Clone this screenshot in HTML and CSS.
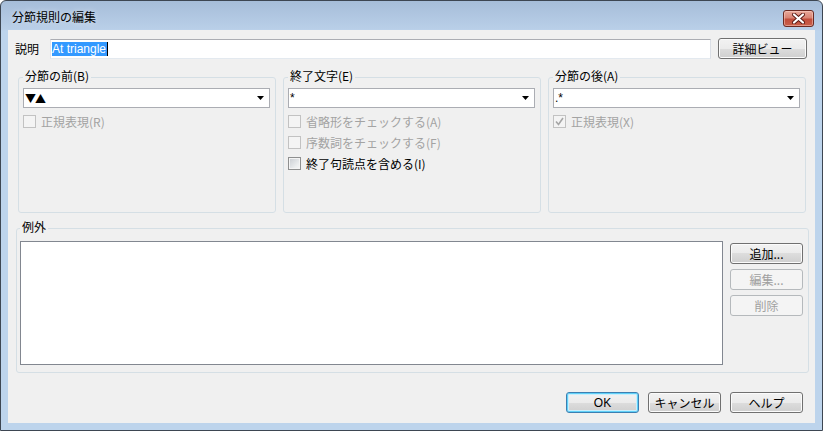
FILE: index.html
```html
<!DOCTYPE html>
<html lang="ja">
<head>
<meta charset="utf-8">
<title>分節規則の編集</title>
<link rel="stylesheet" href="styles.css">
</head>
<body>
<div class="window">
  <div class="titlebar">
    <span class="title">分節規則の編集</span>
    <div class="close">
      <svg width="13" height="11" viewBox="0 0 13 11"><path d="M2 1.5 L11 9.5 M11 1.5 L2 9.5" stroke="#5a1a14" stroke-width="4" stroke-linecap="round"/><path d="M2 1.5 L11 9.5 M11 1.5 L2 9.5" stroke="#ffffff" stroke-width="2.2" stroke-linecap="round"/></svg>
    </div>
  </div>
  <div class="client">
    <div class="row-desc">
      <span class="lbl">説明</span>
      <div class="textbox"><span class="sel">At triangle</span></div>
      <button class="btn detail">詳細ビュー</button>
    </div>
    <div class="groups">
      <fieldset class="group">
        <legend>分節の前(B)</legend>
        <div class="combo"><span class="val tri">▼▲</span><svg class="arrow" width="7" height="4" viewBox="0 0 7 4"><path d="M0 0 H7 L3.5 4 Z" fill="#000"/></svg></div>
        <div class="check disabled"><span class="box"></span><span>正規表現(R)</span></div>
      </fieldset>
      <fieldset class="group">
        <legend>終了文字(E)</legend>
        <div class="combo"><span class="val">*</span><svg class="arrow" width="7" height="4" viewBox="0 0 7 4"><path d="M0 0 H7 L3.5 4 Z" fill="#000"/></svg></div>
        <div class="check disabled"><span class="box"></span><span>省略形をチェックする(A)</span></div>
        <div class="check disabled"><span class="box"></span><span>序数詞をチェックする(F)</span></div>
        <div class="check"><span class="box"></span><span>終了句読点を含める(I)</span></div>
      </fieldset>
      <fieldset class="group">
        <legend>分節の後(A)</legend>
        <div class="combo"><span class="val">.*</span><svg class="arrow" width="7" height="4" viewBox="0 0 7 4"><path d="M0 0 H7 L3.5 4 Z" fill="#000"/></svg></div>
        <div class="check disabled"><span class="box"><svg width="11" height="11" viewBox="0 0 11 11"><path d="M2 5.5 L4.5 8.5 L9 2" fill="none" stroke="#a6a6a6" stroke-width="1.6"/></svg></span><span>正規表現(X)</span></div>
      </fieldset>
    </div>
    <fieldset class="exc">
      <legend>例外</legend>
      <div class="exc-body">
        <div class="listbox"></div>
        <div class="side">
          <button class="btn">追加...</button>
          <button class="btn" disabled>編集...</button>
          <button class="btn" disabled>削除</button>
        </div>
      </div>
    </fieldset>
    <div class="footer">
      <button class="btn default">OK</button>
      <button class="btn">キャンセル</button>
      <button class="btn">ヘルプ</button>
    </div>
  </div>
</div>
</body>
</html>
```
FILE: styles.css
```css
html, body {
  margin: 0;
  padding: 0;
  background: #ffffff;
}
body {
  font-family: "Liberation Sans", "Noto Sans CJK JP", sans-serif;
  font-size: 12px;
  color: #000;
}
.window {
  width: 823px;
  height: 431px;
  box-sizing: border-box;
  border: 1px solid #3d4652;
  border-radius: 6px 6px 0 0;
  background: linear-gradient(#a6bdd9 0px, #b9cfe8 28px, #bdd4ec 30px, #bdd4ec 100%);
  overflow: hidden;
}
.titlebar {
  height: 29px;
  display: flex;
  align-items: flex-start;
}
.title {
  margin: 9px 0 0 11px;
  font-family: "Noto Sans CJK JP", sans-serif;
  font-size: 12px;
  line-height: 14px;
  color: #000;
  text-shadow: 0 0 6px rgba(255,255,255,0.6);
}
.close {
  margin: 9px 8px 0 auto;
  width: 31px;
  height: 17px;
  box-sizing: border-box;
  border: 1px solid #6b2a22;
  border-radius: 3px;
  background: linear-gradient(#e9a99a 0%, #d88474 45%, #c24d3b 55%, #c9604a 100%);
  box-shadow: inset 0 0 0 1px rgba(255,220,210,0.45);
  display: flex;
  align-items: center;
  justify-content: center;
}
.client {
  margin: 0 7px;
  height: 393px;
  background: #f0f0f0;
  display: flex;
  flex-direction: column;
}
.row-desc {
  margin: 8px 8px 0 7px;
  height: 21px;
  display: flex;
  align-items: center;
}
.lbl {
  width: 35px;
  font-family: "Noto Sans CJK JP", sans-serif;
  line-height: 14px;
}
.textbox {
  width: 661px;
  height: 20px;
  box-sizing: border-box;
  border: 1px solid;
  border-color: #abadb3 #dbdfe6 #e3e9ef #e2e3ea;
  background: #fff;
  padding: 2px 0 0 1px;
  display: flex;
  align-items: flex-start;
}
.sel {
  background: #3399ff;
  color: #fff;
  line-height: 14px;
  padding: 0 1px 0 0;
  border-right: 1px solid #000;
}
.btn {
  box-sizing: border-box;
  width: 73px;
  height: 21px;
  padding: 0;
  border: 1px solid #707070;
  border-radius: 3px;
  background: linear-gradient(#f2f2f2 0%, #ebebeb 50%, #dddddd 50%, #cfcfcf 100%);
  box-shadow: inset 0 0 0 1px #fbfbfb;
  font-family: "Noto Sans CJK JP", sans-serif;
  font-size: 12px;
  line-height: 14px;
  color: #000;
}
.btn:disabled {
  border-color: #b5b9bc;
  background: #f4f4f4;
  box-shadow: none;
  color: #a0a0a0;
}
.btn.default {
  border-color: #3c7fb1;
  box-shadow: inset 0 0 0 1px #5fd0f8, inset 0 0 0 2px #c9eefc;
  font-family: "Liberation Sans", sans-serif;
}
.detail {
  width: 89px;
  margin-left: 7px;
}
.groups {
  display: flex;
  gap: 7px;
  margin: 10px 9px 0 10px;
}
fieldset {
  margin: 0;
  min-width: 0;
  box-sizing: border-box;
  border: 1px solid #d5dfe5;
  border-radius: 3px;
}
legend {
  padding: 0 2px 2px;
  line-height: 14px;
  font-family: "Noto Sans CJK JP", sans-serif;
  font-size: 12px;
}
.group {
  width: 258px;
  height: 144px;
  padding: 3px 5px 0 4px;
}
.combo {
  height: 20px;
  box-sizing: border-box;
  border: 1px solid #abadb3;
  background: #fff;
  display: flex;
  align-items: center;
  padding: 0 5px 0 1px;
}
.val {
  flex: 1;
  line-height: 14px;
  font-family: "Liberation Sans", sans-serif;
}
.val.tri {
  font-family: "Noto Sans CJK JP", sans-serif;
  font-size: 11px;
  letter-spacing: -1px;
}
.arrow {
  display: block;
}
.check {
  height: 21px;
  display: flex;
  align-items: center;
  gap: 5px;
  font-family: "Noto Sans CJK JP", sans-serif;
  line-height: 14px;
}
.combo + .check {
  margin-top: 3px;
}
.box {
  width: 13px;
  height: 13px;
  box-sizing: border-box;
  border: 1px solid #8e8f8f;
  background: linear-gradient(135deg, #c8ccd1 0%, #eceeef 70%, #f6f6f6 100%);
  box-shadow: inset 0 0 0 1px #f4f4f4;
  display: flex;
  align-items: center;
  justify-content: center;
}
.check.disabled {
  color: #a3a3a3;
}
.check.disabled .box {
  border-color: #c2c2c2;
  background: #f4f4f4;
  box-shadow: none;
}
.exc {
  margin: 7px 6px 0 8px;
  height: 153px;
  padding: 5px 5px 0 3px;
}
.exc-body {
  display: flex;
}
.listbox {
  width: 703px;
  height: 124px;
  box-sizing: border-box;
  border: 1px solid #828790;
  background: #fff;
}
.side {
  margin: 2px 0 0 7px;
  display: flex;
  flex-direction: column;
  gap: 5px;
}
.footer {
  margin: 19px 12px 0 0;
  display: flex;
  justify-content: flex-end;
  gap: 9px;
}
```
